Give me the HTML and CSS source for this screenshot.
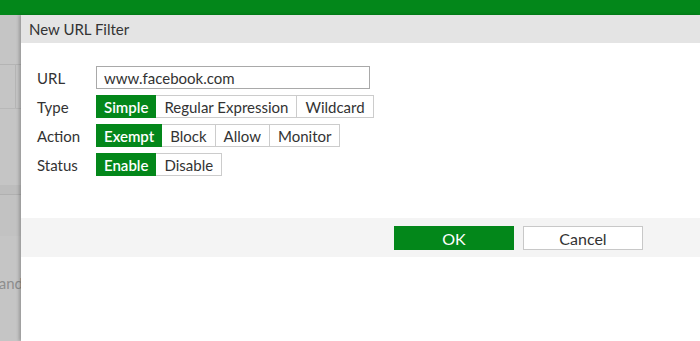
FILE: index.html
```html
<!DOCTYPE html>
<html>
<head>
<meta charset="utf-8">
<link rel="stylesheet" href="styles.css">
</head>
<body>
<div class="topbar"></div>
<div class="stage">
  <div class="backdrop">
    <div class="bd-a"></div>
    <div class="bd-b"><div class="bd-cell"></div></div>
    <div class="bd-c"></div>
    <div class="bd-d"></div>
    <div class="bd-e"></div>
    <div class="bd-f"><span class="bd-text">and</span></div>
  </div>
  <div class="dialog">
    <div class="title">New URL Filter</div>
    <div class="body">
      <div class="row">
        <div class="label">URL</div>
        <div class="input">www.facebook.com</div>
      </div>
      <div class="row">
        <div class="label">Type</div>
        <div class="seg">
          <span class="opt on">Simple</span><span class="opt">Regular Expression</span><span class="opt">Wildcard</span>
        </div>
      </div>
      <div class="row">
        <div class="label">Action</div>
        <div class="seg">
          <span class="opt on">Exempt</span><span class="opt">Block</span><span class="opt">Allow</span><span class="opt">Monitor</span>
        </div>
      </div>
      <div class="row">
        <div class="label">Status</div>
        <div class="seg">
          <span class="opt on">Enable</span><span class="opt">Disable</span>
        </div>
      </div>
    </div>
    <div class="footer">
      <button class="btn ok">OK</button>
      <button class="btn cancel">Cancel</button>
    </div>
  </div>
</div>
</body>
</html>
```
FILE: styles.css
```css
* { box-sizing: border-box; }
html, body { margin: 0; padding: 0; }
body {
  width: 700px;
  height: 341px;
  overflow: hidden;
  font-family: Lato, "Liberation Sans", sans-serif;
  font-size: 15px;
  color: #333;
  background: #fff;
}
.topbar {
  height: 15px;
  background: #03871a;
}
.stage {
  display: flex;
  height: 326px;
}
.backdrop {
  width: 21px;
  flex: none;
  background: #c5c5c5;
  display: flex;
  flex-direction: column;
  overflow: hidden;
}
.bd-a { height: 50px; border-bottom: 1px solid #b4b4b4; }
.bd-b { height: 44px; border-bottom: 1px solid #b8b8b8; }
.bd-cell { width: 16px; height: 100%; border-right: 1px solid #b4b4b4; }
.bd-c { height: 76px; }
.bd-d { height: 10px; background: #bdbdbd; border-bottom: 1px solid #b0b0b0; }
.bd-e { height: 41px; background: #c2c2c2; }
.bd-f { flex: 1; position: relative; }
.bd-text {
  position: absolute;
  right: -2px;
  top: 38px;
  color: #8e8e8e;
  font-size: 15px;
}
.dialog {
  flex: 1;
  display: flex;
  flex-direction: column;
  background: #fff;
  box-shadow: -2px 0 3px rgba(0,0,0,0.22);
  position: relative;
}
.title {
  height: 28px;
  background: #e4e4e4;
  padding-left: 8px;
  display: flex;
  align-items: center;
  color: #333;
}
.body {
  padding: 23px 0 42px 16px;
  display: flex;
  flex-direction: column;
  gap: 6px;
}
.row {
  display: flex;
  align-items: center;
  height: 23px;
}
.label {
  width: 59px;
  flex: none;
}
.input {
  width: 274px;
  height: 23px;
  border: 1px solid #a9a9a9;
  padding-left: 7px;
  display: flex;
  align-items: center;
}
.seg {
  display: flex;
  height: 23px;
}
.opt {
  display: flex;
  align-items: center;
  padding: 0 8px;
  border: 1px solid #cccccc;
  border-left-width: 0;
  background: #fff;
}
.opt:first-child { border-left-width: 1px; }
.opt.on {
  background: #03871a;
  border-color: #03871a;
  color: #fff;
  font-weight: 600;
  padding: 0 7px;
}
.footer {
  height: 39px;
  background: #f4f4f4;
  display: flex;
  justify-content: flex-end;
  align-items: flex-start;
  padding: 8px 57px 0 0;
  gap: 9px;
}
.btn {
  width: 120px;
  height: 24px;
  font-family: Lato, "Liberation Sans", sans-serif;
  font-size: 16px;
  padding: 0;
  cursor: pointer;
}
.btn.ok {
  background: #03871a;
  border: 1px solid #03871a;
  color: #fff;
}
.btn.cancel {
  background: #fff;
  border: 1px solid #c8c8c8;
  color: #333;
}
```
